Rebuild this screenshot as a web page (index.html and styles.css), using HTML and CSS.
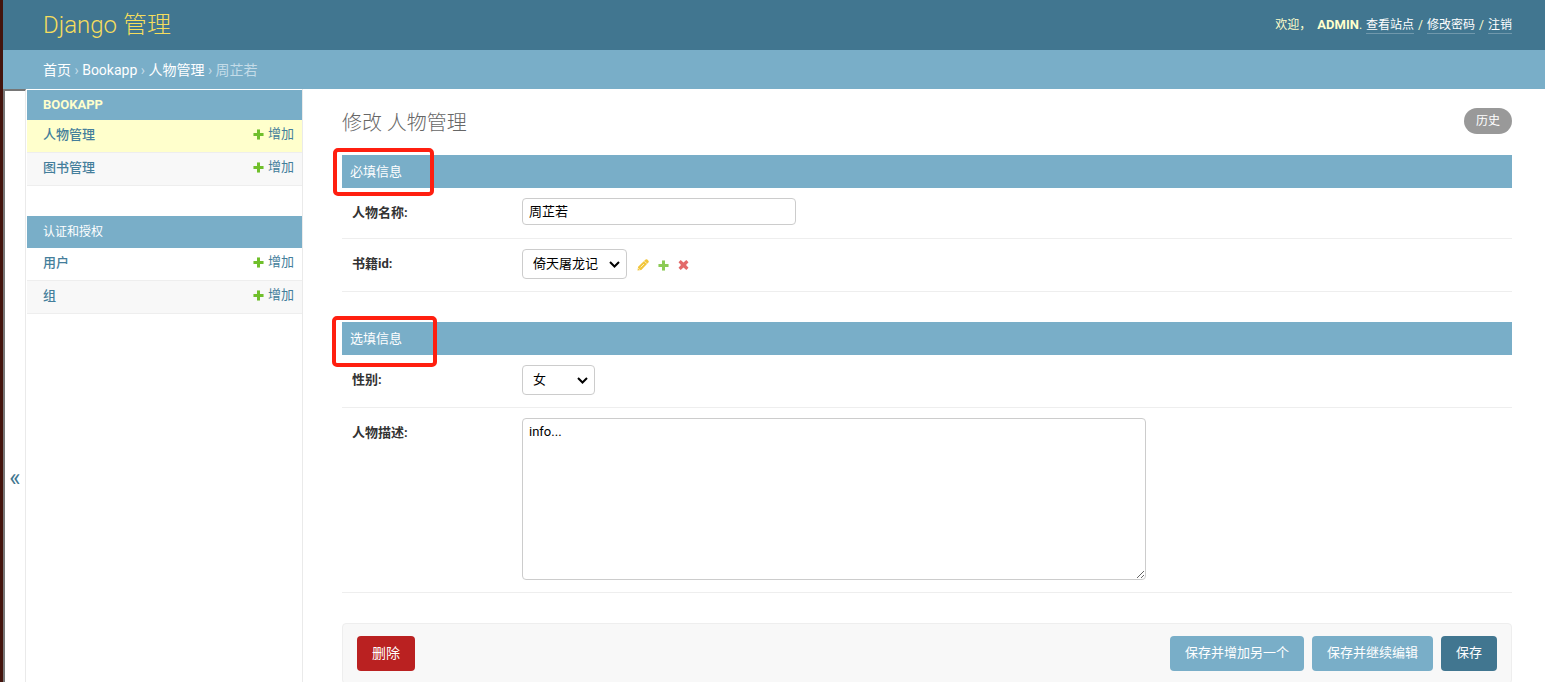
FILE: index.html
```html
<!DOCTYPE html>
<html lang="zh-Hans">
<head>
<meta charset="utf-8">
<title>修改 人物管理 | Django 管理</title>
<link rel="stylesheet" href="styles.css">
</head>
<body>
<svg class="sprite" aria-hidden="true">
  <symbol id="plus" viewBox="0 0 11 11"><path d="M4 0h3v4h4v3H7v4H4V7H0V4h4z" opacity=".55"/><path d="M4 1h3v3h3v3H7v3H4V7H1V4h3z"/></symbol>
  <symbol id="pencil" viewBox="0 0 12 12"><path fill="#efb80b" d="M8.6.6a1.2 1.2 0 0 1 1.7 0l1.1 1.1a1.2 1.2 0 0 1 0 1.7L4.300 10.900.500 11.500 1.100 7.700z"/><path fill="none" stroke="#fff" stroke-width=".7" d="M7.400 2.200l2.400 2.400M3.600 8.400l3.400-3.400M1.300 9.200l1.500 1.500"/></symbol>
  <symbol id="cross" viewBox="0 0 10 10"><path d="M2.200 0 5 2.500 7.800 0 10 2.200 7.500 5 10 7.800 7.800 10 5 7.500 2.200 10 0 7.800 2.500 5 0 2.200z"/></symbol>
</svg>
<div class="app">
  <header class="header">
    <h1 class="brand"><a href="#">Django 管理</a></h1>
    <div class="user-tools">
      <span>欢迎，</span>
      <strong>ADMIN</strong><span>.</span>
      <a href="#">查看站点</a><span>/</span>
      <a href="#">修改密码</a><span>/</span>
      <a href="#">注销</a>
    </div>
  </header>
  <nav class="breadcrumbs" aria-label="breadcrumbs">
    <a href="#">首页</a> › <a href="#">Bookapp</a> › <a href="#">人物管理</a> › 周芷若
  </nav>
  <div class="main">
    <button class="toggle" type="button" aria-label="切换导航">«</button>
    <nav class="sidebar" aria-label="应用">
      <table class="module">
        <caption><a class="section section-current" href="#">BOOKAPP</a></caption>
        <tbody>
          <tr class="current"><th scope="row"><a href="#">人物管理</a></th><td><a class="add" href="#"><svg><use href="#plus"/></svg>增加</a></td></tr>
          <tr><th scope="row"><a href="#">图书管理</a></th><td><a class="add" href="#"><svg><use href="#plus"/></svg>增加</a></td></tr>
        </tbody>
      </table>
      <table class="module">
        <caption><a class="section section-tall" href="#">认证和授权</a></caption>
        <tbody>
          <tr><th scope="row"><a href="#">用户</a></th><td><a class="add" href="#"><svg><use href="#plus"/></svg>增加</a></td></tr>
          <tr><th scope="row"><a href="#">组</a></th><td><a class="add" href="#"><svg><use href="#plus"/></svg>增加</a></td></tr>
        </tbody>
      </table>
    </nav>
    <main class="content">
      <div class="title-row">
        <h2 class="title">修改 人物管理</h2>
        <a class="history" href="#">历史</a>
      </div>
      <form class="form">
        <section class="fieldset">
          <h3 class="legend">必填信息<span class="mark mark-required"></span></h3>
          <div class="row">
            <label for="name">人物名称:</label>
            <input class="text" id="name" type="text" value="周芷若">
          </div>
          <div class="row">
            <label for="book">书籍id:</label>
            <select class="select-book" id="book"><option>倚天屠龙记</option></select>
            <div class="related">
              <a href="#" aria-label="修改"><svg class="pencil"><use href="#pencil"/></svg></a>
              <a href="#" aria-label="增加"><svg class="plus"><use href="#plus"/></svg></a>
              <a href="#" aria-label="删除"><svg class="cross"><use href="#cross"/></svg></a>
            </div>
          </div>
        </section>
        <section class="fieldset">
          <h3 class="legend">选填信息<span class="mark mark-optional"></span></h3>
          <div class="row">
            <label for="gender">性别:</label>
            <select class="select-gender" id="gender"><option>女</option></select>
          </div>
          <div class="row">
            <label for="desc">人物描述:</label>
            <textarea id="desc">info...</textarea>
          </div>
        </section>
        <div class="submit-row">
          <a class="button delete" href="#">删除</a>
          <button class="button" type="button">保存并增加另一个</button>
          <button class="button" type="button">保存并继续编辑</button>
          <button class="button primary" type="button">保存</button>
        </div>
      </form>
    </main>
  </div>
</div>
</body>
</html>
```
FILE: styles.css
```css
* { box-sizing: border-box; }

body {
  margin: 0;
  font-family: Roboto, "Noto Sans CJK SC", sans-serif;
  font-size: 13px;
  line-height: 20px;
  color: #333;
  background: #fff;
}

a { color: #447e9b; text-decoration: none; }
h1, h2, h3 { margin: 0; }
input, select, textarea, button { font-family: inherit; font-size: 13px; }

.sprite { position: absolute; width: 0; height: 0; }

.app {
  display: flex;
  flex-direction: column;
  height: 100vh;
  overflow: hidden;
  border-left: 3px solid #43140d;
}

.header {
  display: flex;
  flex: none;
  align-items: center;
  justify-content: space-between;
  height: 50px;
  padding: 0 33px 0 40px;
  background: #417690;
  color: #ffc;
}
.brand { font-size: 24px; font-weight: 300; line-height: 30px; }
.brand a { color: #f5dd5d; }
.user-tools { display: flex; align-items: center; font-size: 12px; font-weight: 400; }
.user-tools strong { margin-left: 6px; font-size: 13px; font-weight: 700; }
.user-tools a {
  margin: 1px 4px 0;
  line-height: 16px;
  color: #fff;
  border-bottom: 1px solid rgba(255, 255, 255, .25);
}
.user-tools a:last-child { margin-right: 0; }

.breadcrumbs {
  flex: none;
  height: 39px;
  padding: 10px 40px;
  background: #79aec8;
  color: #c4dce8;
  font-size: 14px;
}
.breadcrumbs a { color: #fff; }

.main { display: flex; flex: 1; min-height: 0; }

.toggle {
  display: flex;
  flex: none;
  justify-content: center;
  width: 23px;
  padding: 377px 0 0;
  border: solid #767676;
  border-width: 2px 0 0 2px;
  border-right: 1px solid #eaeaea;
  background: #fff;
  color: #417690;
  font-size: 24px;
  line-height: 20px;
}

.sidebar {
  flex: none;
  width: 277px;
  padding: 1px 0 0 1px;
  border-right: 1px solid #eaeaea;
}
.module { width: 100%; margin-bottom: 30px; border-spacing: 0; }
.module caption { text-align: left; background: #79aec8; }
.section { display: block; padding: 5px 16px; font-size: 12px; color: #fff; }
.section-current { font-size: 13px; font-weight: 700; color: #ffc; }
.section-tall { padding: 6px 16px; }
.module th, .module td { height: 33px; padding: 0 8px 2px; border-bottom: 1px solid #eee; }
.module th { padding-left: 16px; text-align: left; font-weight: 500; }
.module td { text-align: right; }
.module tr:nth-child(even) { background: #f8f8f8; }
.module .current { background: #ffc; }
.add { display: inline-flex; align-items: center; gap: 4px; }
.add svg { width: 11px; height: 11px; fill: #70bf2b; }

.content { flex: 1; min-width: 0; padding: 19px 33px 0 39px; }
.title-row {
  display: flex;
  align-items: flex-start;
  justify-content: space-between;
  margin-bottom: 17px;
}
.title { font-size: 20px; font-weight: 300; line-height: 30px; color: #666; }
.history {
  padding: 3px 12px;
  border-radius: 15px;
  background: #999;
  color: #fff;
  font-size: 12px;
}

.fieldset { margin-bottom: 30px; }
.legend {
  position: relative;
  padding: 7px 8px 6px;
  background: #79aec8;
  color: #fff;
  font-size: 13px;
  font-weight: 400;
}
.mark { position: absolute; border: 4px solid #ff1f10; border-radius: 5px; }
.mark-required { top: -7px; left: -9px; width: 101px; height: 48px; }
.mark-optional { top: -6px; left: -10px; width: 105px; height: 51px; }

.row {
  display: flex;
  align-items: flex-start;
  padding: 10px 10px 12px;
  border-bottom: 1px solid #eee;
}
.row label { width: 170px; padding-top: 5px; font-weight: 700; color: #333; }
.text, select, textarea {
  border: 1px solid #ccc;
  border-radius: 4px;
  background: #fff;
  color: #000;
}
.text { width: 274px; height: 27px; margin-bottom: 1px; padding: 2px 6px 4px; }
select {
  height: 30px;
  padding: 4px 10px 6px;
  appearance: none;
  background: #fff url("data:image/svg+xml,%3Csvg xmlns='http://www.w3.org/2000/svg' width='11' height='7'%3E%3Cpath d='M1 1l4.500 4.500L10 1' fill='none' stroke='%23000' stroke-width='2'/%3E%3C/svg%3E") no-repeat right 6px center;
}
.select-book { width: 105px; }
.select-gender { width: 73px; }
textarea { width: 624px; height: 162px; padding: 4px 6px; line-height: 18px; }

.related { display: flex; gap: 9px; padding: 10px 0 0 10px; }
.related a { display: flex; align-items: center; height: 12px; opacity: .8; }
.pencil { width: 12px; height: 12px; }
.plus { width: 11px; height: 11px; fill: #70bf2b; }
.cross { width: 11px; height: 10px; fill: #dd4646; }

.submit-row {
  display: flex;
  gap: 8px;
  padding: 12px 14px;
  border: 1px solid #eee;
  border-radius: 4px;
  background: #f8f8f8;
}
.button {
  height: 35px;
  padding: 7px 15px 8px;
  border: 0;
  border-radius: 4px;
  background: #79aec8;
  color: #fff;
  line-height: 20px;
}
.primary { background: #417690; }
.delete { margin-right: auto; background: #ba2121; font-size: 14px; }
```
